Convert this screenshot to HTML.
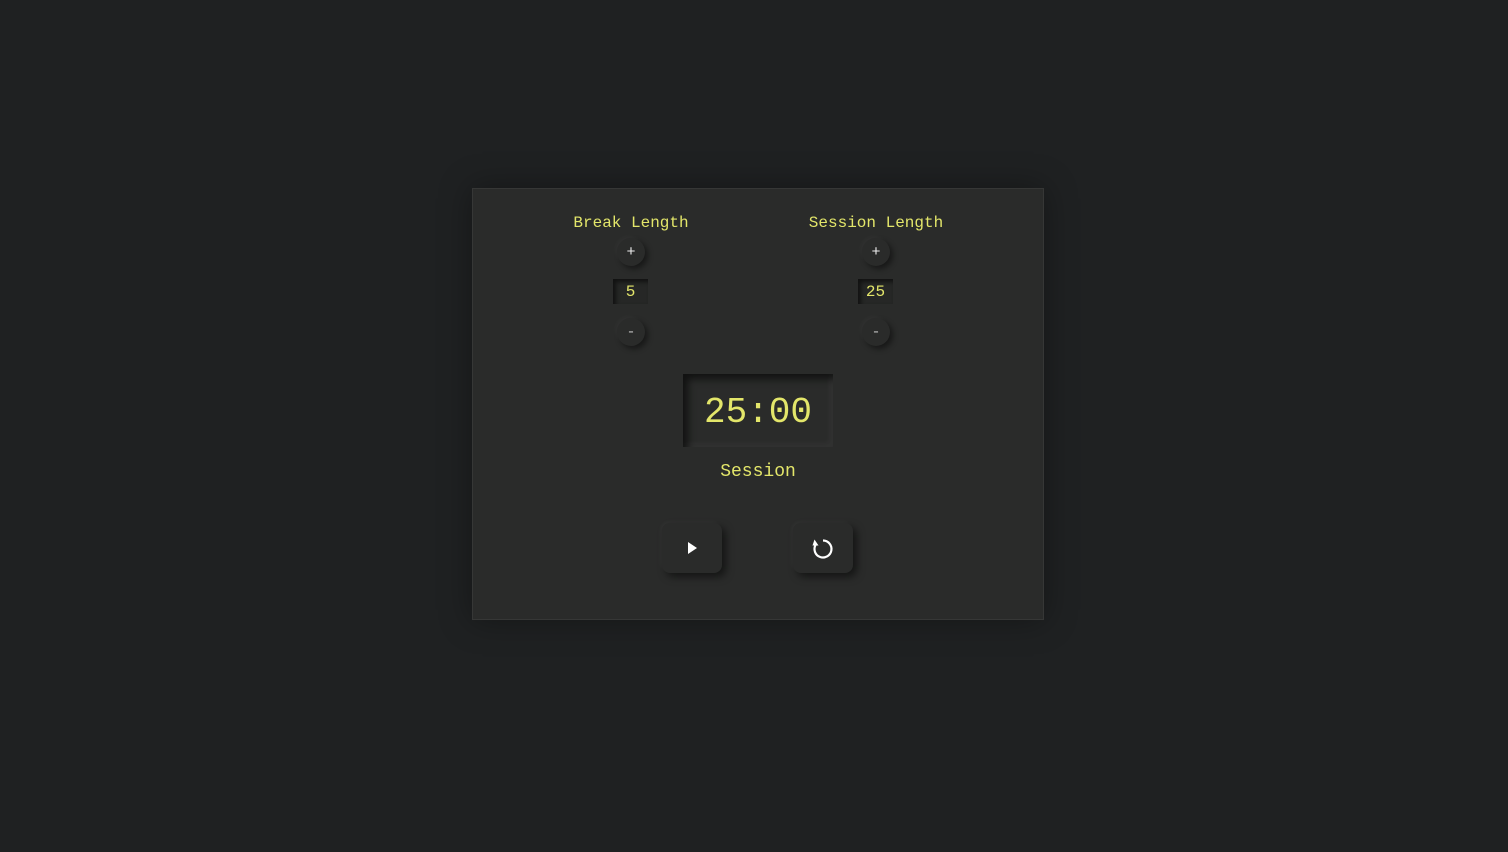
<!DOCTYPE html>
<html><head><meta charset="utf-8"><style>
html,body{margin:0;height:852px;background:#1f2122;overflow:hidden;font-family:"Liberation Mono","DejaVu Sans Mono",monospace;}
.panel{position:absolute;left:472px;top:188px;width:570px;height:430px;background:#2a2b2a;border:1px solid #363736;box-shadow:0 0 30px rgba(0,0,0,.35);}
.y{color:#e3e66a;}
.lbl{position:absolute;top:25px;font-size:16px;text-align:center;width:200px;}
.circ{position:absolute;width:28px;height:28px;border-radius:50%;background:#2a2b2a;box-shadow:3px 3px 6px rgba(0,0,0,.45),-2px -2px 4px rgba(255,255,255,.03);color:#eee;font-size:15px;text-align:center;line-height:30px;}
.val{position:absolute;width:35px;height:25px;background:#262726;box-shadow:inset 3px 3px 4px rgba(0,0,0,.55);text-align:center;line-height:27px;font-size:16px;}
.timer{position:absolute;left:210px;top:185px;width:150px;height:73px;background:#2a2b2a;box-shadow:inset 5px 5px 8px rgba(0,0,0,.6),inset -3px -3px 6px rgba(255,255,255,.05);text-align:center;line-height:78px;font-size:36px;}
.sess{position:absolute;left:185px;top:273px;width:200px;text-align:center;font-size:18px;}
.btn{position:absolute;top:334px;width:60px;height:50px;border-radius:8px;background:#2a2b2a;box-shadow:4px 4px 8px rgba(0,0,0,.5),-2px -2px 5px rgba(255,255,255,.03);}
</style></head><body>
<div class="panel">
<div class="lbl y" style="left:58px">Break Length</div>
<div class="lbl y" style="left:303px">Session Length</div>
<div class="circ" style="left:144px;top:49px">+</div>
<div class="circ" style="left:389px;top:49px">+</div>
<div class="val y" style="left:140px;top:90px">5</div>
<div class="val y" style="left:385px;top:90px">25</div>
<div class="circ" style="left:144px;top:129px;color:#bbb">-</div>
<div class="circ" style="left:389px;top:129px;color:#bbb">-</div>
<div class="timer y">25:00</div>
<div class="sess y">Session</div>
<div class="btn" style="left:189px"><svg width="60" height="50"><path d="M26 19 L35 25 L26 31Z" fill="#fff"/></svg></div>
<div class="btn" style="left:320px"><svg width="60" height="50"><path d="M30 17.5 A8.5 8.5 0 1 1 22.6 21.8" fill="none" stroke="#fff" stroke-width="2.2"/><path d="M19.5 22.5 L25.5 22.5 L21.5 16.5Z" fill="#fff"/></svg></div>
</div>
</body></html>
